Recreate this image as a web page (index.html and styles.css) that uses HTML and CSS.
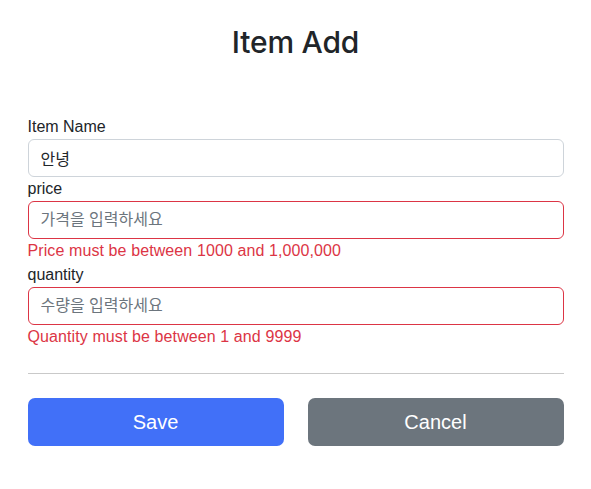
FILE: index.html
```html
<!DOCTYPE html>
<html lang="ko">
<head>
<meta charset="utf-8">
<title>Item Add</title>
<link rel="stylesheet" href="styles.css">
</head>
<body>
<div class="container">
  <div class="header">
    <h2 class="title">Item Add</h2>
  </div>
  <form class="form">
    <label class="label" for="itemName">Item Name</label>
    <input class="input" id="itemName" type="text" value="안녕">
    <label class="label" for="price">price</label>
    <input class="input invalid" id="price" type="text" placeholder="가격을 입력하세요">
    <div class="feedback">Price must be between 1000 and 1,000,000</div>
    <label class="label" for="quantity">quantity</label>
    <input class="input invalid" id="quantity" type="text" placeholder="수량을 입력하세요">
    <div class="feedback">Quantity must be between 1 and 9999</div>
    <hr class="divider">
    <div class="actions">
      <button class="btn btn-primary" type="button">Save</button>
      <button class="btn btn-secondary" type="button">Cancel</button>
    </div>
  </form>
</div>
</body>
</html>
```

FILE: styles.css
```css
* { box-sizing: border-box; }
html, body { margin: 0; padding: 0; background: #fff; }
body {
  font-family: "Liberation Sans", Arial, "Noto Sans CJK KR", sans-serif;
  font-size: 16px;
  line-height: 24px;
  color: #212529;
}
.container {
  max-width: 560px;
  margin: 0 auto;
  padding: 0 12px;
}
.header {
  padding-top: 23px;
  padding-bottom: 54px;
  text-align: center;
}
.title {
  margin: 0;
  font-family: Inter, "Liberation Sans", sans-serif;
  font-size: 30px;
  line-height: 38px;
  font-weight: 500;
  letter-spacing: -0.2px;
}
.form { display: flex; flex-direction: column; }
.label { display: block; height: 24px; }
.input {
  display: block;
  width: 100%;
  height: 38px;
  padding: 6px 12px;
  font-family: inherit;
  font-size: 16px;
  line-height: 24px;
  color: #212529;
  background: #fff;
  border: 1px solid #ced4da;
  border-radius: 6px;
  outline: none;
}
.input::placeholder { color: #6c757d; }
.input.invalid { border-color: #dc3545; }
.feedback { color: #dc3545; height: 24px; letter-spacing: 0.1px; }
.divider {
  margin: 24px 0;
  border: 0;
  border-top: 1px solid #c9c9c9;
  height: 0;
}
.actions {
  display: grid;
  grid-template-columns: 1fr 1fr;
  gap: 24px;
}
.btn {
  height: 48px;
  border: 0;
  border-radius: 7px;
  font-family: inherit;
  font-size: 20px;
  color: #fff;
  cursor: pointer;
}
.btn-primary { background: #4170f8; }
.btn-secondary { background: #6c757d; }
```
